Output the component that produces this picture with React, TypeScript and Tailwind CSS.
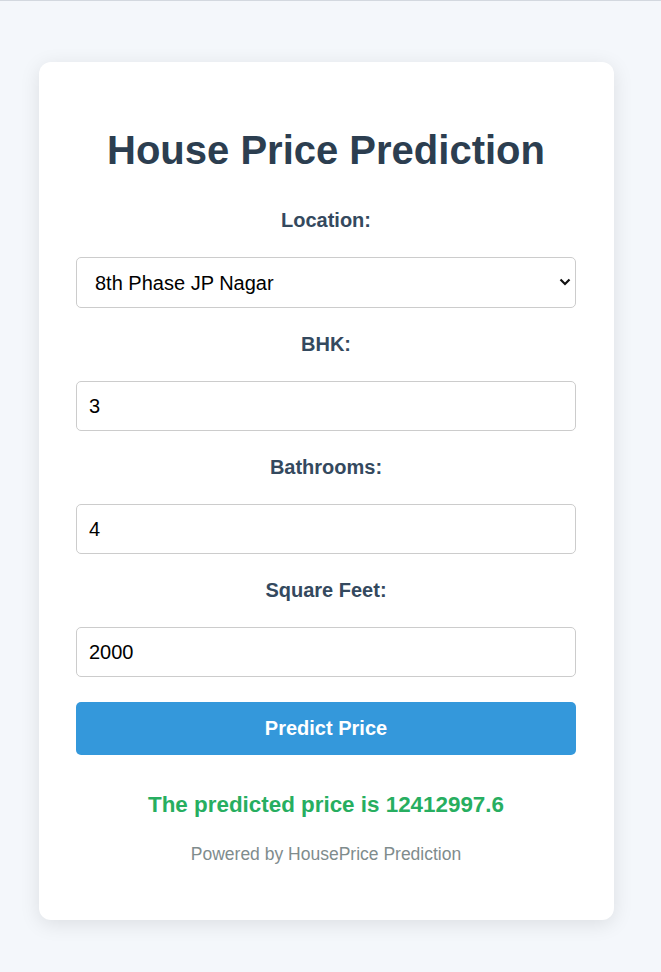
import React from "react";

export default function App() {
  const font = { fontFamily: '"Liberation Sans", Arial, sans-serif' };
  return (
    <div
      className="min-h-[972px] w-full bg-[#f4f7fb] border-t border-[#d3d8df] flex flex-col items-start"
      style={font}
    >
      <div className="mt-[61px] ml-[39px] w-[575px] bg-white rounded-[12px] shadow-[0_4px_20px_rgba(0,0,0,0.1)] pt-[65px] pb-[56px] pl-[37px] pr-[38px] flex flex-col items-stretch">
        <h1 className="text-center text-[40px] leading-[46px] font-bold text-[#2c3e50]">
          House Price Prediction
        </h1>

        <label className="mt-[36px] text-center text-[20px] leading-[22px] font-bold text-[#34495e]">
          Location:
        </label>
        <div className="relative mt-[26px] h-[51px]">
          <select
            defaultValue="8th Phase JP Nagar"
            className="appearance-none w-full h-full border border-[#cccccc] rounded-[5px] bg-white pl-[18px] pr-10 text-[20px] text-black outline-none"
            style={font}
          >
            <option>8th Phase JP Nagar</option>
          </select>
          <svg
            className="absolute right-[5px] top-[21px] pointer-events-none"
            width="12"
            height="8"
            viewBox="0 0 12 8"
          >
            <path d="M1.5 1.5 L6 6 L10.5 1.5" fill="none" stroke="#111" strokeWidth="2.2" />
          </svg>
        </div>

        <label className="mt-[25px] text-center text-[20px] leading-[22px] font-bold text-[#34495e]">
          BHK:
        </label>
        <input
          defaultValue="3"
          className="mt-[26px] h-[50px] border border-[#cccccc] rounded-[5px] px-[12px] text-[20px] text-black outline-none"
          style={font}
        />

        <label className="mt-[25px] text-center text-[20px] leading-[22px] font-bold text-[#34495e]">
          Bathrooms:
        </label>
        <input
          defaultValue="4"
          className="mt-[26px] h-[50px] border border-[#cccccc] rounded-[5px] px-[12px] text-[20px] text-black outline-none"
          style={font}
        />

        <label className="mt-[25px] text-center text-[20px] leading-[22px] font-bold text-[#34495e]">
          Square Feet:
        </label>
        <input
          defaultValue="2000"
          className="mt-[26px] h-[50px] border border-[#cccccc] rounded-[5px] px-[12px] text-[20px] text-black outline-none"
          style={font}
        />

        <button
          className="mt-[25px] h-[53px] pb-[2px] bg-[#3498db] rounded-[5px] text-white text-[20px] leading-[22px] font-bold"
          style={font}
        >
          Predict Price
        </button>

        <p className="mt-[37px] text-center text-[22.4px] leading-[26px] font-bold text-[#27ae60]">
          The predicted price is 12412997.6
        </p>
        <p className="mt-[26px] text-center text-[17.5px] leading-[20px] text-[#7f8c8d]">
          Powered by HousePrice Prediction
        </p>
      </div>
    </div>
  );
}
